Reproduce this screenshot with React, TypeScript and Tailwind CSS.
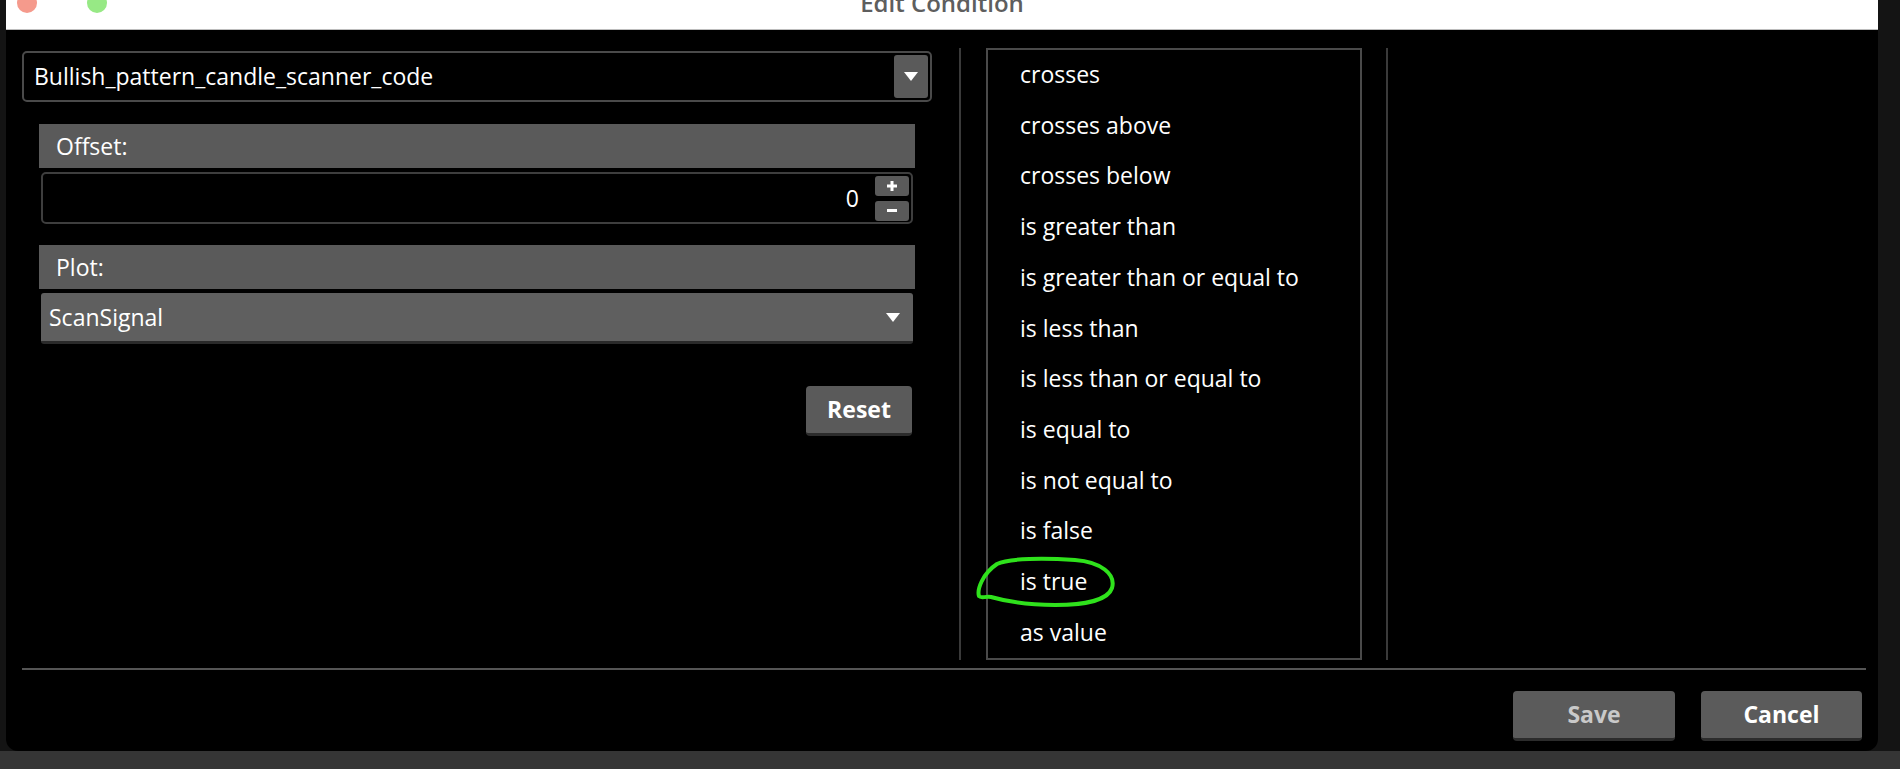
import React from "react";

const operators = [
  "crosses",
  "crosses above",
  "crosses below",
  "is greater than",
  "is greater than or equal to",
  "is less than",
  "is less than or equal to",
  "is equal to",
  "is not equal to",
  "is false",
  "is true",
  "as value",
];

function Triangle() {
  return (
    <svg width="14" height="9" viewBox="0 0 14 9">
      <path d="M0 0 L14 0 L7 9 Z" fill="#ffffff" />
    </svg>
  );
}

function SectionHeader({ label }: { label: string }) {
  return (
    <div className="flex h-[44px] items-center bg-[#5a5a5a] pl-[17px] text-[23px] text-white">
      {label}
    </div>
  );
}

export default function App() {
  return (
    <div className="relative h-[769px] w-[1900px] overflow-hidden bg-[#353535] font-['Open_Sans',sans-serif]">
      <div className="flex h-[751px] bg-[#141414]">
        <div className="ml-[6px] flex w-[1872px] flex-col overflow-hidden rounded-b-[12px] bg-black">
          {/* title bar */}
          <div className="relative flex h-[30px] shrink-0 justify-center border-b border-[#bdbdbd] bg-white">
            <div className="absolute top-[-7px] left-[11px] h-[20px] w-[20px] rounded-full bg-[#f59a8c]" />
            <div className="absolute top-[-7px] left-[81px] h-[20px] w-[20px] rounded-full bg-[#97e985]" />
            <span className="-mt-[15px] text-[24px] font-semibold text-[#5e5e5e]">Edit Condition</span>
          </div>

          {/* body */}
          <div className="flex flex-1 flex-col pt-[18px] pl-[16px] pr-[12px]">
            <div className="flex h-[612px]">
              {/* left column */}
              <div className="flex w-[910px] flex-col pt-[3px]">
                <div className="flex h-[51px] items-center justify-between rounded-[5px] border-2 border-[#4a4a4a] pl-[10px] pr-[2px]">
                  <span className="text-[23px] text-white">Bullish_pattern_candle_scanner_code</span>
                  <div className="flex h-[43px] w-[34px] items-center justify-center rounded-[3px] bg-[#5a5a5a]">
                    <Triangle />
                  </div>
                </div>

                <div className="mt-[22px] flex flex-col px-[17px]">
                  <SectionHeader label="Offset:" />
                  <div className="mx-[2px] mt-[4px] flex h-[52px] items-center justify-end rounded-[5px] border-2 border-[#3e3e3e] pr-[2px]">
                    <span className="mr-[16px] text-[23px] text-white">0</span>
                    <div className="flex flex-col gap-[5px]">
                      <div className="flex h-[20px] w-[34px] items-center justify-center rounded-[3px] bg-[#5a5a5a]">
                        <svg width="12" height="12" viewBox="0 0 12 12">
                          <path d="M6 1 V11 M1 6 H11" stroke="#ffffff" strokeWidth="3" />
                        </svg>
                      </div>
                      <div className="flex h-[20px] w-[34px] items-center justify-center rounded-[3px] bg-[#5a5a5a]">
                        <div className="h-[3px] w-[10px] bg-white" />
                      </div>
                    </div>
                  </div>

                  <div className="mt-[21px]">
                    <SectionHeader label="Plot:" />
                  </div>
                  <div className="mx-[2px] mt-[4px] flex h-[51px] items-center justify-between rounded-[3px] border-b-[3px] border-[#2a2a2a] bg-[#5f5f5f] pr-[13px] pl-[8px]">
                    <span className="text-[23px] text-white">ScanSignal</span>
                    <Triangle />
                  </div>

                  <div className="mt-[42px] flex justify-end pr-[3px]">
                    <button className="h-[50px] w-[106px] rounded-[4px] border-b-[3px] border-[#2c2c2c] bg-[#5a5a5a] text-[23px] font-bold text-white">
                      Reset
                    </button>
                  </div>
                </div>
              </div>

              <div className="ml-[27px] w-[2px] bg-[#3a3a3a]" />

              {/* operator list */}
              <div className="relative ml-[25px] w-[376px] overflow-hidden border-2 border-[#4a4a4a] pt-[0px]">
                <div className="-mt-[1px]">
                  {operators.map((op) => (
                    <div key={op} className="flex h-[50.7px] items-center pl-[32px] text-[23px] text-white">
                      {op}
                    </div>
                  ))}
                </div>
              </div>

              <div className="ml-[24px] w-[2px] bg-[#3a3a3a]" />
            </div>

            <div className="mt-[8px] h-[2px] w-full bg-[#555555]" />

            <div className="mt-[21px] flex justify-end gap-[26px] pr-[4px]">
              <button className="h-[50px] w-[162px] rounded-[4px] border-b-[3px] border-[#2c2c2c] bg-[#5b5b5b] text-[23px] font-bold text-[#c9c9c9]">
                Save
              </button>
              <button className="h-[50px] w-[161px] rounded-[4px] border-b-[3px] border-[#2c2c2c] bg-[#5b5b5b] text-[23px] font-bold text-white">
                Cancel
              </button>
            </div>
          </div>
        </div>
      </div>

      {/* hand-drawn highlight around "is true" */}
      <svg
        className="pointer-events-none absolute top-[552px] left-[975px]"
        width="145"
        height="56"
        viewBox="0 0 145 56"
      >
        <path
          d="M4 44 C2 38 7 22 22 12 C34 6 70 6 100 8 C126 10 141 22 137 36 C133 48 110 53 80 53 C55 53 30 49 16 45 C10 44 6 47 4 44"
          fill="none"
          stroke="#2fe21c"
          strokeWidth="4"
          strokeLinecap="round"
        />
      </svg>
    </div>
  );
}
